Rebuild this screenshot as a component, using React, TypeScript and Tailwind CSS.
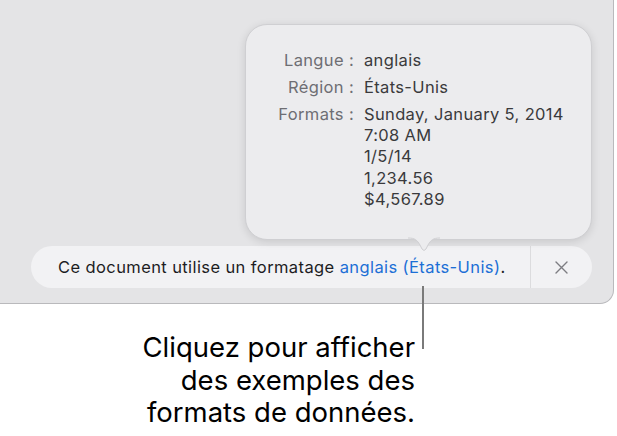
const FONT = { fontFamily: 'Inter, "Liberation Sans", Arial, sans-serif' };

const ROWS = [
  { label: 'Langue :', values: ['anglais'] },
  { label: 'Région :', values: ['États-Unis'] },
  {
    label: 'Formats :',
    values: ['Sunday, January 5, 2014', '7:08 AM', '1/5/14', '1,234.56', '$4,567.89'],
  },
];

function Popover() {
  return (
    <div className="absolute left-[245px] top-[24px] w-[347px]">
      <div className="rounded-[22px] border border-[#cfcfd2] bg-[#ececee] pb-[29px] pt-[25px] shadow-[0_2px_8px_rgba(0,0,0,0.12)]">
        <div className="flex flex-col gap-[5.7px]">
          {ROWS.map((r) => (
            <div key={r.label} className="flex gap-[10px] text-[16.5px] leading-[21.25px] tracking-[0.35px]">
              <div className="w-[108px] shrink-0 text-right text-[#6e6e73]">{r.label}</div>
              <div className="flex flex-col text-[#3a3a3c]">
                {r.values.map((v) => (
                  <span key={v}>{v}</span>
                ))}
              </div>
            </div>
          ))}
        </div>
      </div>
      {/* pointer */}
      <svg
        className="absolute left-[163px] top-[213px]"
        width="32"
        height="15"
        viewBox="0 0 32 15"
      >
        <path
          d="M0 1 C7 1 9 3 12 8 L14 12 Q16 15 18 12 L20 8 C23 3 25 1 32 1 Z"
          fill="#ececee"
        />
        <path
          d="M0 1 C7 1 9 3 12 8 L14 12 Q16 15 18 12 L20 8 C23 3 25 1 32 1"
          fill="none"
          stroke="#cfcfd2"
          strokeWidth="1"
        />
      </svg>
    </div>
  );
}

export default function App() {
  return (
    <div className="relative h-[436px] w-[617px] overflow-hidden bg-white" style={FONT}>
      <div className="h-[304px] w-[614px] rounded-br-[14px] border-b border-r border-[#b9b9bc] bg-[#e4e4e6] pt-[246px]">
        <div className="ml-[31px] flex h-[42px] w-[561px] items-center rounded-full bg-[#f2f2f4]">
          <div className="flex-1 whitespace-nowrap pl-[27px] text-[16.5px] tracking-[0.4px] text-[#1d1d1f]">
            Ce document utilise un formatage{' '}
            <span className="text-[#1c6fd6]">anglais (États-Unis)</span>.
          </div>
          <div className="h-full w-px bg-[#dcdcde]" />
          <div className="flex w-[61px] items-center justify-center">
            <svg width="13" height="13" viewBox="0 0 13 13">
              <path d="M1 1 L12 12 M12 1 L1 12" stroke="#7d7d82" strokeWidth="1.4" strokeLinecap="round" />
            </svg>
          </div>
        </div>
      </div>

      <Popover />

      {/* callout line */}
      <div className="absolute left-[422px] top-[286px] h-[63px] w-[2px] bg-[#7a7a7a]" />

      <div className="w-[415px] whitespace-nowrap pt-[27px] text-right text-[27.5px] leading-[32.5px] text-black">
        Cliquez pour afficher
        <br />
        des exemples des
        <br />
        formats de données.
      </div>
    </div>
  );
}
